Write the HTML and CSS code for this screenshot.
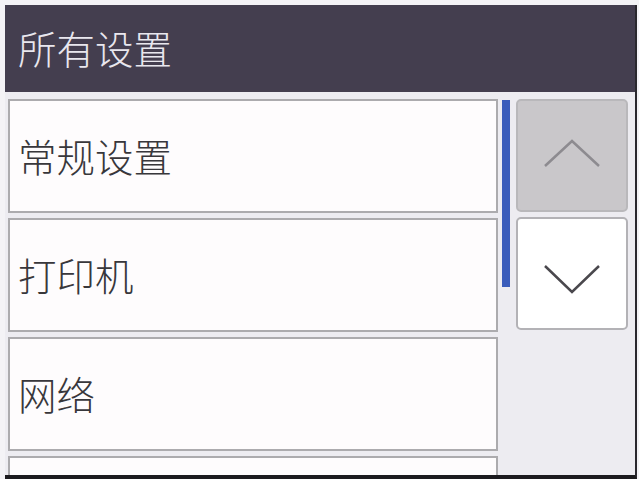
FILE: index.html
```html
<!DOCTYPE html>
<html lang="zh">
<head>
<meta charset="utf-8">
<link rel="stylesheet" href="styles.css">
</head>
<body>
<div class="screen">
  <div class="header">所有设置</div>
  <div class="content">
    <div class="list">
      <div class="item">常规设置</div>
      <div class="item">打印机</div>
      <div class="item">网络</div>
      <div class="item"></div>
    </div>
    <div class="track"><div class="thumb"></div></div>
    <div class="buttons">
      <div class="btn btn-up">
        <svg width="58" height="30" viewBox="0 0 58 30"><polyline points="2,28 29,3 56,28" fill="none" stroke="#8d8b90" stroke-width="2.5"/></svg>
      </div>
      <div class="btn btn-down">
        <svg width="58" height="32" viewBox="0 0 58 32"><polyline points="2,3 29,29 56,3" fill="none" stroke="#4a484d" stroke-width="2.5"/></svg>
      </div>
    </div>
  </div>
</div>
</body>
</html>
```

FILE: styles.css
```css
html, body {
  margin: 0;
  padding: 0;
  background: #f4f3f6;
  font-family: "Noto Sans CJK SC", "Noto Sans", sans-serif;
}
body {
  padding: 5px 2px 0 5px;
  width: 639px;
  height: 479px;
  box-sizing: border-box;
  overflow: hidden;
}
.screen {
  width: 632px;
  height: 474px;
  box-sizing: border-box;
  border-right: 2px solid #2a282e;
  border-bottom: 4px solid #1c1b1f;
  background: #edecf1;
  display: flex;
  flex-direction: column;
  overflow: hidden;
}
.header {
  height: 87px;
  flex: none;
  background: #443e4f;
  color: #e9e7ee;
  font-size: 38.5px;
  font-weight: 300;
  line-height: 84px;
  padding-left: 13px;
}
.content {
  flex: 1;
  display: flex;
  padding: 7px 0 0 3px;
  overflow: hidden;
}
.list {
  width: 490px;
  display: flex;
  flex-direction: column;
  gap: 5px;
  flex: none;
}
.item {
  height: 114px;
  flex: none;
  box-sizing: border-box;
  border: 2px solid #acabae;
  background: #fefcfd;
  color: #38373b;
  font-size: 38.5px;
  font-weight: 300;
  line-height: 108px;
  padding-left: 8px;
}
.track {
  width: 8px;
  flex: none;
  padding-top: 1px;
  margin-left: 4px;
}
.thumb {
  height: 187px;
  background: #3a5cbb;
}
.buttons {
  width: 112px;
  flex: none;
  display: flex;
  flex-direction: column;
  gap: 5px;
  margin-left: 6px;
}
.btn {
  height: 113px;
  box-sizing: border-box;
  border: 2px solid #b3b2b6;
  border-radius: 5px;
  display: flex;
  align-items: center;
  justify-content: center;
}
.btn-up {
  background: #c9c7ca;
  border-color: #b9b8bb;
}
.btn-up svg { margin-top: -6px; }
.btn-down {
  background: #ffffff;
}
.btn-down svg { margin-top: 10px; }
```
